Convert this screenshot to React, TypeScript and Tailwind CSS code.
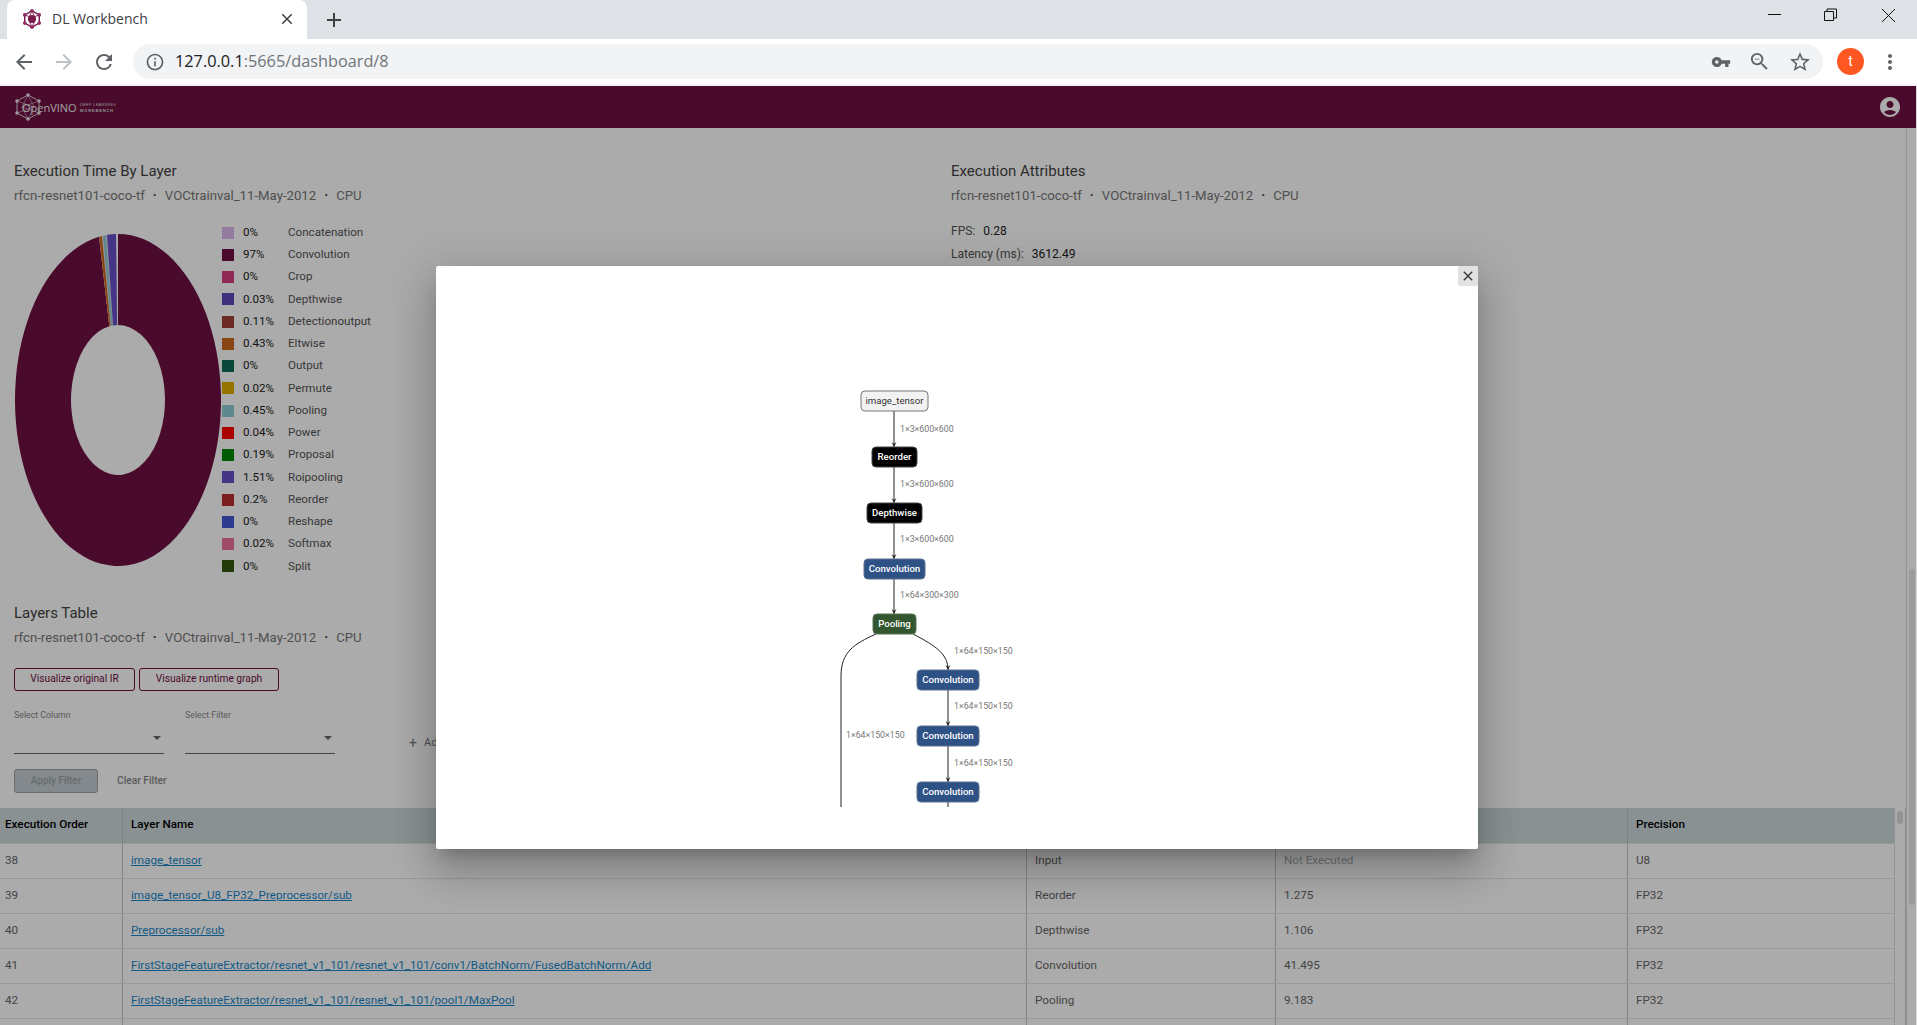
import { MdAdd, MdAccountCircle, MdArrowBack, MdArrowForward, MdClose, MdInfoOutline, MdMoreVert, MdRefresh, MdStarBorder, MdVpnKey, MdZoomOut } from "react-icons/md";

const legend = [
  ["#dcb6ee", "0%", "Concatenation"],
  ["#6d0f42", "97%", "Convolution"],
  ["#d53f7f", "0%", "Crop"],
  ["#5f48bd", "0.03%", "Depthwise"],
  ["#a04137", "0.11%", "Detectionoutput"],
  ["#ce671f", "0.43%", "Eltwise"],
  ["#0f6e56", "0%", "Output"],
  ["#dfae00", "0.02%", "Permute"],
  ["#8ecdd1", "0.45%", "Pooling"],
  ["#ff0000", "0.04%", "Power"],
  ["#008800", "0.19%", "Proposal"],
  ["#674fc9", "1.51%", "Roipooling"],
  ["#b63030", "0.2%", "Reorder"],
  ["#4557d4", "0%", "Reshape"],
  ["#ec719c", "0.02%", "Softmax"],
  ["#33570c", "0%", "Split"],
];

const rows = [
  ["38", "image_tensor", "Input", "Not Executed", "U8"],
  ["39", "image_tensor_U8_FP32_Preprocessor/sub", "Reorder", "1.275", "FP32"],
  ["40", "Preprocessor/sub", "Depthwise", "1.106", "FP32"],
  ["41", "FirstStageFeatureExtractor/resnet_v1_101/resnet_v1_101/conv1/BatchNorm/FusedBatchNorm/Add", "Convolution", "41.495", "FP32"],
  ["42", "FirstStageFeatureExtractor/resnet_v1_101/resnet_v1_101/pool1/MaxPool", "Pooling", "9.183", "FP32"],
];

// graph nodes, coordinates relative to the modal
const nodes = [
  { label: "image_tensor", x: 425, y: 125, w: 67, fill: "#f2f2f2", text: "#333333", stroke: "#777777" },
  { label: "Reorder", x: 436, y: 181, w: 45, fill: "#000000", text: "#ffffff", stroke: "#444444" },
  { label: "Depthwise", x: 431, y: 237, w: 55, fill: "#000000", text: "#ffffff", stroke: "#444444" },
  { label: "Convolution", x: 428, y: 293, w: 61, fill: "#2f5286", text: "#ffffff", stroke: "#5a6f90" },
  { label: "Pooling", x: 437, y: 348, w: 43, fill: "#33552f", text: "#ffffff", stroke: "#5b7058" },
  { label: "Convolution", x: 481, y: 404, w: 62, fill: "#2f5286", text: "#ffffff", stroke: "#5a6f90" },
  { label: "Convolution", x: 481, y: 460, w: 62, fill: "#2f5286", text: "#ffffff", stroke: "#5a6f90" },
  { label: "Convolution", x: 481, y: 516, w: 62, fill: "#2f5286", text: "#ffffff", stroke: "#5a6f90" },
];

const edges = [
  "M458 145V181", "M458 201V237", "M458 257V293", "M458 313V348",
  "M477 368C500 380 512 388 512 404", "M512 424V460", "M512 480V516", "M512 536V541",
  "M440 368C418 378 405 386 405 410V541",
];

const arrows = [[458, 181], [458, 237], [458, 293], [458, 348], [512, 404], [512, 460], [512, 516]];

const edgeLabels = [
  { t: "1×3×600×600", x: 464, y: 164 },
  { t: "1×3×600×600", x: 464, y: 219 },
  { t: "1×3×600×600", x: 464, y: 274 },
  { t: "1×64×300×300", x: 464, y: 330 },
  { t: "1×64×150×150", x: 518, y: 386 },
  { t: "1×64×150×150", x: 518, y: 441 },
  { t: "1×64×150×150", x: 518, y: 498 },
  { t: "1×64×150×150", x: 410, y: 470 },
];

function slice(from: number, to: number, fill: string) {
  const p = (a: number, rx: number, ry: number) => {
    const r = (a * Math.PI) / 180;
    return `${104 + rx * Math.sin(r)} ${166 - ry * Math.cos(r)}`;
  };
  const large = to - from > 180 ? 1 : 0;
  return (
    <path
      d={`M${p(from, 103, 166)}A103 166 0 ${large} 1 ${p(to, 103, 166)}L${p(to, 47, 75)}A47 75 0 ${large} 0 ${p(from, 47, 75)}Z`}
      fill={fill}
    />
  );
}

function Subtitle() {
  return (
    <p className="mt-[8px] flex h-[15px] items-center text-[13.2px] leading-[15px] text-[#777777]">
      <span>rfcn-resnet101-coco-tf</span>
      <span className="mx-[8px] font-bold text-[#333333]">·</span>
      <span>VOCtrainval_11-May-2012</span>
      <span className="mx-[8px] font-bold text-[#333333]">·</span>
      <span>CPU</span>
    </p>
  );
}

function TabIcon() {
  return (
    <svg viewBox="0 0 22 22" className="h-[20px] w-[20px] shrink-0" fill="none" stroke="#7b1c4f" strokeWidth="1.6">
      <path d="M11 2L19 6.5V15.5L11 20L3 15.5V6.5Z" />
      <path d="M11 2L15 11L11 20L7 11ZM3 6.5L15 11M19 6.5L7 11" strokeWidth="1" />
      <circle cx="11" cy="11" r="3.5" fill="#7b1c4f" />
      {[[11, 2], [19, 6.5], [19, 15.5], [11, 20], [3, 15.5], [3, 6.5]].map(([x, y]) => (
        <circle key={`${x}-${y}`} cx={x} cy={y} r="2" fill="#8f2d62" stroke="none" />
      ))}
    </svg>
  );
}

function Logo() {
  return (
    <div className="flex items-center">
      <svg viewBox="0 0 28 28" className="h-[28px] w-[28px] shrink-0" fill="none" stroke="#e8e8e8" strokeWidth="0.9">
        <path d="M14 2L25 8V20L14 26L3 20V8Z" />
        <path d="M14 2L20 14L14 26L8 14ZM3 8L20 14M25 8L8 14M3 20L20 14M25 20L8 14" strokeWidth="0.5" />
        {[[14, 2], [25, 8], [25, 20], [14, 26], [3, 20], [3, 8]].map(([x, y]) => (
          <circle key={`${x}-${y}`} cx={x} cy={y} r="1.8" fill="#e8e8e8" stroke="none" />
        ))}
      </svg>
      <span className="-ml-[20px] font-['Open_Sans',sans-serif] text-[11px] leading-none text-[#f0f0f0]">OpenVINO</span>
      <div className="ml-[3px] mt-[1px] flex flex-col font-['Liberation_Sans',sans-serif] text-[4px] leading-[6px] tracking-[0.3px] text-[#dddddd]">
        <span>DEEP LEARNING</span>
        <span className="font-bold tracking-[0.8px]">WORKBENCH</span>
      </div>
    </div>
  );
}

function SelectBox({ label }: { label: string }) {
  return (
    <div className="w-[150px]">
      <p className="text-[8.8px] leading-[12px] text-[#888888]">{label}</p>
      <div className="relative mt-[6px] h-[27px] border-b border-[#666666]">
        <span className="absolute right-[3px] top-[9px] h-0 w-0 border-x-[4px] border-t-[4px] border-x-transparent border-t-[#666666]" />
      </div>
    </div>
  );
}

export default function App() {
  return (
    <div className="flex h-screen w-full flex-col overflow-hidden bg-white font-['Roboto',sans-serif]">
      {/* browser tabs */}
      <div className="flex h-[39px] shrink-0 items-end bg-[#dee1e6] pl-[7px] pr-[22px]">
        <div className="flex h-[39px] w-[300px] items-center rounded-t-[8px] bg-white pb-[2px] pl-[15px] pr-[11px]">
          <TabIcon />
          <span className="ml-[10px] flex-1 font-['Open_Sans',sans-serif] text-[14px] text-[#3c4043]">DL Workbench</span>
          <MdClose className="text-[18px] text-[#3c4043]" />
        </div>
        <div className="ml-[15px] flex h-[39px] items-center">
          <MdAdd className="text-[24px] text-[#3c4043]" />
        </div>
        <div className="ml-auto flex h-[39px] items-start pt-[8px]">
          <svg width="13" height="14" viewBox="0 0 13 14" stroke="#111111" fill="none"><path d="M0 6.5H13" /></svg>
          <svg className="ml-[43px]" width="13" height="14" viewBox="0 0 13 14" stroke="#111111" fill="none"><path d="M.5 3.5H9.5V12.5H.5ZM3 3.5V1H12.5V10H9.5" /></svg>
          <svg className="ml-[45px]" width="13" height="14" viewBox="0 0 13 14" stroke="#111111" fill="none"><path d="M0 1L13 14M13 1L0 14" /></svg>
        </div>
      </div>

      {/* browser toolbar */}
      <div className="flex h-[47px] shrink-0 items-start border-b-2 border-[#f1f3f4] bg-white pl-[12px] pt-[5px]">
        <div className="flex h-[35px] items-center gap-[16px] text-[24px]">
          <MdArrowBack className="text-[#5f6368]" />
          <MdArrowForward className="text-[#bdc1c6]" />
          <MdRefresh className="text-[#5f6368]" />
        </div>
        <div className="ml-[17px] flex h-[35px] w-[1690px] items-center rounded-full bg-[#f1f3f4] pl-[12px] pr-[11px]">
          <MdInfoOutline className="text-[20px] text-[#5f6368]" />
          <span className="ml-[10px] flex-1 font-['Open_Sans',sans-serif] text-[16.3px] text-[#70757a]">
            <span className="text-[#202124]">127.0.0.1</span>:5665/dashboard/8
          </span>
          <div className="flex items-center gap-[17px] text-[22px] text-[#5f6368]">
            <MdVpnKey className="text-[20px]" />
            <MdZoomOut className="text-[23px]" />
            <MdStarBorder className="text-[24px]" />
          </div>
        </div>
        <div className="ml-[14px] mt-[4px] flex h-[27px] w-[27px] items-center justify-center rounded-full bg-[#ff5722] text-[14px] text-white">t</div>
        <MdMoreVert className="ml-[14px] mt-[6px] text-[24px] text-[#5f6368]" />
      </div>

      {/* app */}
      <div className="relative flex min-h-0 flex-1">
        <div className="flex min-w-0 flex-1 flex-col">
          <header className="flex h-[42px] shrink-0 items-center justify-between bg-[#6f1042] pl-[14px] pr-[14px]">
            <Logo />
            <MdAccountCircle className="text-[24px] text-white" />
          </header>

          <div className="flex min-h-0 flex-1">
            <main className="flex min-w-0 flex-1 flex-col">
              <div className="grid grid-cols-[937px_1fr] pl-[14px] pt-[34px]">
                <section>
                  <h2 className="text-[15px] leading-[18px] text-[#444444]">Execution Time By Layer</h2>
                  <Subtitle />
                  <div className="mt-[22px] flex">
                    <svg viewBox="0 0 208 332" className="mt-[9px] h-[332px] w-[208px] shrink-0">
                      {slice(0, 349.4, "#6d0f42")}
                      {slice(-10.6, -1.1, "#e8d8e8")}
                      {slice(-10.6, -9, "#ce671f")}
                      {slice(-8.4, -6.7, "#8ecdd1")}
                      {slice(-6.1, -1.1, "#674fc9")}
                    </svg>
                    <ul className="-mt-[3.5px]">
                      {legend.map(([color, pct, name]) => (
                        <li key={name} className="flex h-[22.25px] items-center text-[11.6px] text-[#555555]">
                          <span className="h-[12px] w-[12px]" style={{ backgroundColor: color }} />
                          <span className="ml-[9px] w-[45px] text-[#222222]">{pct}</span>
                          <span>{name}</span>
                        </li>
                      ))}
                    </ul>
                  </div>
                </section>
                <section>
                  <h2 className="text-[15px] leading-[18px] text-[#444444]">Execution Attributes</h2>
                  <Subtitle />
                  <div className="mt-[17px] text-[12px] text-[#555555]">
                    <p className="flex h-[22.5px] items-center">FPS:<span className="ml-[8px] text-[#222222]">0.28</span></p>
                    <p className="flex h-[22.5px] items-center">Latency (ms):<span className="ml-[8px] text-[#222222]">3612.49</span></p>
                  </div>
                </section>
              </div>

              <section className="pl-[14px] pt-[26.5px]">
                <h2 className="text-[15px] leading-[18px] text-[#444444]">Layers Table</h2>
                <Subtitle />
                <div className="mt-[22.5px] flex gap-[4px]">
                  <button className="h-[23px] w-[121px] rounded-[3px] border border-[#6f1042] text-[10.2px] text-[#6f1042]">Visualize original IR</button>
                  <button className="h-[23px] w-[140px] rounded-[3px] border border-[#6f1042] text-[10.2px] text-[#6f1042]">Visualize runtime graph</button>
                </div>
                <div className="mt-[18px] flex items-end">
                  <SelectBox label="Select Column" />
                  <div className="ml-[21px]"><SelectBox label="Select Filter" /></div>
                  <span className="ml-[74px] flex items-center gap-[7px] text-[11px] text-[#777777]"><span className="text-[14px]">+</span>Add New Filter</span>
                </div>
                <div className="mt-[15px] flex items-center">
                  <button className="h-[24px] w-[84px] rounded-[3px] border border-[#9aa3a8] bg-[#c4cdd2] text-[10px] font-medium text-[#9aa1a5]">Apply Filter</button>
                  <span className="ml-[19px] text-[10.2px] font-medium text-[#888888]">Clear Filter</span>
                </div>
              </section>

              {/* layers table */}
              <div className="mt-[15px] flex min-h-0 flex-1 overflow-hidden">
                <div className="flex w-[1894px] shrink-0 flex-col">
                  <div className="grid h-[35px] shrink-0 grid-cols-[122px_904px_249px_352px_1fr] items-center bg-[#cdd8db] text-[11.7px] font-medium text-black">
                    {["Execution Order", "Layer Name", "Layer Type", "Execution Time (ms)", "Precision"].map((h, i) => (
                      <div key={h} className={`flex h-full items-center ${i === 0 ? "pl-[5px]" : "border-l border-[#b5c0c5] pl-[8px]"}`}>{h}</div>
                    ))}
                  </div>
                  {rows.map((r) => (
                    <div key={r[0]} className="grid h-[35px] shrink-0 grid-cols-[122px_904px_249px_352px_1fr] items-center border-t border-[#e4e4e4] text-[11.7px] text-[#666666]">
                      <div className="pl-[5px]">{r[0]}</div>
                      <div className="flex h-full items-center border-l border-[#bccaca] pl-[8px]">
                        <a className="text-[#1a87c9] underline">{r[1]}</a>
                      </div>
                      <div className="flex h-full items-center border-l border-[#bccaca] pl-[8px]">{r[2]}</div>
                      <div className={`flex h-full items-center border-l border-[#bccaca] pl-[8px] ${r[3] === "Not Executed" ? "text-[#a8b0b0]" : ""}`}>{r[3]}</div>
                      <div className="flex h-full items-center border-l border-[#bccaca] pl-[8px]">{r[4]}</div>
                    </div>
                  ))}
                  <div className="grid h-[35px] shrink-0 grid-cols-[122px_904px_249px_352px_1fr] border-t border-[#e4e4e4]">
                    <div />
                    <div className="border-l border-[#bccaca]" />
                    <div className="border-l border-[#bccaca]" />
                    <div className="border-l border-[#bccaca]" />
                    <div className="border-l border-[#bccaca]" />
                  </div>
                </div>
                <div className="flex w-[12px] shrink-0 justify-center border-x border-[#dddddd] border-r-[#d0d0d0] bg-white pt-[3px]">
                  <div className="h-[13px] w-[6px] rounded-full bg-[#dcdcdc]" />
                </div>
              </div>
            </main>

            {/* page scrollbar */}
            <div className="flex w-[10px] shrink-0 justify-center border-l border-[#dcdcdc] bg-white pt-[441px]">
              <div className="h-[336px] w-[6px] rounded-full bg-[#e8e8e8]" />
            </div>
          </div>
        </div>
        <div className="w-[1px] shrink-0 bg-[#d8d8d8]" />

        {/* modal backdrop */}
        <div className="absolute inset-y-0 left-0 right-[1px] bg-black/[0.33]" />

        {/* modal */}
        <div className="absolute left-[436px] top-[180px] h-[583px] w-[1042px] rounded-[2px] bg-white shadow-[0_11px_15px_-7px_rgba(0,0,0,0.2),0_24px_38px_3px_rgba(0,0,0,0.14),0_9px_46px_8px_rgba(0,0,0,0.12)]">
          <button className="absolute right-0 top-0 flex h-[20px] w-[20px] items-center justify-center rounded-[2px] bg-[#e2e2e2] text-[#333333]">
            <MdClose className="text-[16px]" />
          </button>
          <svg viewBox="0 0 1042 583" className="h-[583px] w-[1042px]" fontFamily="Roboto, sans-serif">
            {edges.map((d) => (
              <path key={d} d={d} fill="none" stroke="#222222" strokeWidth="1" />
            ))}
            {arrows.map(([x, y]) => (
              <path key={`${x}-${y}`} d={`M${x - 2.5} ${y - 5}L${x} ${y}L${x + 2.5} ${y - 5}L${x} ${y - 3}Z`} fill="#222222" />
            ))}
            {edgeLabels.map((l) => (
              <text key={`${l.x}-${l.y}`} x={l.x} y={l.y} fontSize="8.8" fill="#777777" dominantBaseline="middle">{l.t}</text>
            ))}
            {nodes.map((n) => (
              <g key={`${n.label}-${n.y}`}>
                <rect x={n.x} y={n.y} width={n.w} height="20" rx="4" fill={n.fill} stroke={n.stroke} />
                <text x={n.x + n.w / 2} y={n.y + 10.5} fontSize="9.6" fontWeight={n.fill === "#f2f2f2" ? 400 : 500} fill={n.text} textAnchor="middle" dominantBaseline="middle">{n.label}</text>
              </g>
            ))}
          </svg>
        </div>
      </div>
    </div>
  );
}
